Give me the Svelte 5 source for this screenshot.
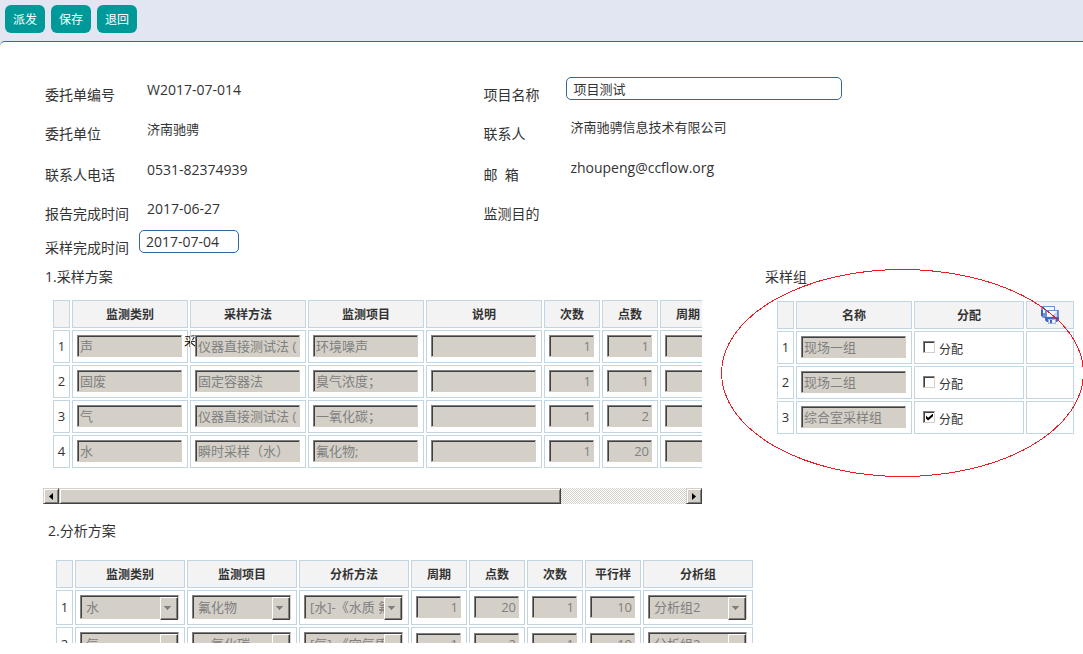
<script lang="ts">
	type Field = { id: string; label: string; value: string; kind: 'text' | 'short' | 'long' | 'empty' };

	const actions = ['派发', '保存', '退回'];

	const fields: Field[] = [
		{ id: 'orderNo', label: '委托单编号', value: 'W2017-07-014', kind: 'text' },
		{ id: 'project', label: '项目名称', value: '项目测试', kind: 'long' },
		{ id: 'client', label: '委托单位', value: '济南驰骋', kind: 'text' },
		{ id: 'contact', label: '联系人', value: '济南驰骋信息技术有限公司', kind: 'text' },
		{ id: 'phone', label: '联系人电话', value: '0531-82374939', kind: 'text' },
		{ id: 'email', label: '邮\u00a0 箱', value: 'zhoupeng@ccflow.org', kind: 'text' },
		{ id: 'reportDate', label: '报告完成时间', value: '2017-06-27', kind: 'text' },
		{ id: 'purpose', label: '监测目的', value: '', kind: 'empty' },
		{ id: 'sampleDate', label: '采样完成时间', value: '2017-07-04', kind: 'short' }
	];

	const planHeads = ['监测类别', '采样方法', '监测项目', '说明', '次数', '点数', '周期'];
	const plans = [
		['声', '仪器直接测试法 (', '环境噪声', '', '1', '1', ''],
		['固废', '固定容器法', '臭气浓度；', '', '1', '1', ''],
		['气', '仪器直接测试法 (', '一氧化碳；', '', '1', '2', ''],
		['水', '瞬时采样（水）', '氟化物;', '', '1', '20', '']
	];

	let groups = $state([
		{ name: '现场一组', assigned: false },
		{ name: '现场二组', assigned: false },
		{ name: '综合室采样组', assigned: true }
	]);

	const analysisHeads = ['监测类别', '监测项目', '分析方法', '周期', '点数', '次数', '平行样', '分析组'];
	const analyses = [
		['水', '氟化物', '[水]-《水质 氟化物的测定》', '1', '20', '1', '10', '分析组2'],
		['气', '一氧化碳', '[气]-《空气质量 一氧化碳》', '1', '2', '1', '10', '分析组2']
	];

	const isLatin = (s: string) => /^[\x20-\x7e]+$/.test(s);
	const isNumberCol = (i: number) => i > 2 && i < 7;
</script>

<div class="page">
	<header class="toolbar">
		{#each actions as action}
			<button type="button" class="action">{action}</button>
		{/each}
	</header>

	<main class="sheet">
		<div class="fields">
			{#each fields as f}
				{#if f.kind === 'short' || f.kind === 'long'}
					<label class="label" for={f.id}>{f.label}</label>
					<div class="entry">
						<input id={f.id} class="box {f.kind}" class:latin={isLatin(f.value)} value={f.value} />
					</div>
				{:else}
					<span class="label">{f.label}</span>
					<span class="value" class:latin={isLatin(f.value)}>{f.value}</span>
				{/if}
			{/each}
		</div>

		<div class="sections">
			<section>
				<h2>1.采样方案</h2>
				<div class="viewport">
					<table>
						<thead>
							<tr>
								<th class="idx"></th>
								{#each planHeads as head, i}
									<th class={i < 4 ? 'wide' : 'num'}>{head}</th>
								{/each}
							</tr>
						</thead>
						<tbody>
							{#each plans as row, r}
								<tr>
									<td class="idx">{r + 1}</td>
									{#each row as cell, i}
										<td>
											<input class="cell" class:number={i > 3} value={cell} aria-label={planHeads[i]} disabled />
											{#if r === 0 && i === 0}<span class="stray">采</span>{/if}
										</td>
									{/each}
								</tr>
							{/each}
						</tbody>
					</table>
				</div>
				<div class="scrollbar">
					<button type="button" class="raised arrow" aria-label="向左">
						<svg viewBox="0 0 4 7" width="4" height="7"><path d="M4 0v7L0 3.5z" /></svg>
					</button>
					<div class="track"><div class="raised thumb"></div></div>
					<button type="button" class="raised arrow" aria-label="向右">
						<svg viewBox="0 0 4 7" width="4" height="7"><path d="M0 0v7l4-3.5z" /></svg>
					</button>
				</div>
			</section>

			<section class="group">
				<h2>采样组</h2>
				<table>
					<thead>
						<tr>
							<th class="idx"></th>
							<th class="wide">名称</th>
							<th class="mid">分配</th>
							<th class="tool">
								<svg class="save-all" viewBox="0 0 18 18" width="18" height="18">
									<path d="M0 0h14v12H2l-2-2z" fill="#6f90d6" />
									<path d="M2 1h11v6H2z" fill="#f4f8ff" />
									<path d="M0 4h2v6H0z" fill="#3f63bd" />
									<path d="M4 4h14v10l-2 2H6l-2-2z" fill="#6f90d6" />
									<path d="M6 5h10v6H6z" fill="#f4f8ff" />
									<path d="M10 11l6-6v6z" fill="#c3d4f6" />
									<path d="M4 11h14v3h-1l-1 2H6l-2-2z" fill="#3f67c2" />
									<path d="M7 13h8v5H7z" fill="#9fb6e2" />
									<path d="M8 14h6v3H8z" fill="#eef3fb" />
									<path d="M9 14h2v3H9z" fill="#3f63bd" />
								</svg>
							</th>
						</tr>
					</thead>
					<tbody>
						{#each groups as g, r}
							<tr>
								<td class="idx">{r + 1}</td>
								<td><input class="cell" value={g.name} aria-label="名称" disabled /></td>
								<td>
									<label class="check"><input type="checkbox" bind:checked={g.assigned} /><span>分配</span></label>
								</td>
								<td></td>
							</tr>
						{/each}
					</tbody>
				</table>
				<svg class="mark" viewBox="0 0 363 208" shape-rendering="crispEdges">
					<ellipse cx="181.5" cy="104" rx="181" ry="103.5" />
				</svg>
			</section>
		</div>

		<section class="analysis">
			<h2>2.分析方案</h2>
			<table>
				<thead>
					<tr>
						<th class="idx"></th>
						{#each analysisHeads as head, i}
							<th class={isNumberCol(i) ? 'num' : 'mid'}>{head}</th>
						{/each}
					</tr>
				</thead>
				<tbody>
					{#each analyses as row, r}
						<tr>
							<td class="idx">{r + 1}</td>
							{#each row as cell, i}
								<td>
									{#if isNumberCol(i)}
										<input class="cell number" value={cell} aria-label={analysisHeads[i]} disabled />
									{:else}
										<span class="drop">
											<select aria-label={analysisHeads[i]} disabled>
												<option>{cell}</option>
											</select>
										</span>
									{/if}
								</td>
							{/each}
						</tr>
					{/each}
				</tbody>
			</table>
		</section>
	</main>
</div>

<style>
	:global(body) {
		margin: 0;
		background: #e2e6f2;
	}

	.page {
		display: flex;
		flex-direction: column;
		height: 100vh;
		overflow: hidden;
		color: #333;
		font-family: 'Open Sans', 'Noto Sans CJK SC', sans-serif;
		font-size: 13px;
	}

	.page * {
		box-sizing: border-box;
	}

	button,
	input,
	select {
		margin: 0;
		font-family: inherit;
	}

	.toolbar {
		display: flex;
		gap: 6px;
		padding: 5px 5px 8px;
	}

	.action {
		height: 28px;
		padding: 0 8px;
		border: 0;
		border-radius: 6px;
		background: #099;
		color: #fff;
		font-size: 12px;
	}

	.sheet {
		flex: 1;
		min-height: 0;
		display: flex;
		flex-direction: column;
		padding: 29px 0 11px 43px;
		border-top: 1px solid #3a5fcd;
		border-top-left-radius: 5px;
		background: #fff;
	}

	.fields {
		display: grid;
		grid-template-columns: 94px 2fr 83px 3fr;
		grid-template-rows: 38px 40px 41px 38px 30px;
		align-items: center;
		padding-left: 2px;
	}

	.label {
		padding-top: 10px;
		font-size: 14px;
		line-height: 20px;
	}

	.value {
		padding-left: 8px;
		line-height: 20px;
	}

	.value:nth-child(4n) {
		padding: 0 0 4px 4px;
	}

	.latin {
		font-size: 14px;
	}

	.entry {
		padding-bottom: 3px;
	}

	.box {
		display: block;
		height: 23px;
		padding: 0 6px;
		border: 1px solid #369;
		border-radius: 5px;
		background: #fff;
		color: #333;
	}

	.box:not(.latin) {
		font-size: 13px;
	}

	.short {
		width: 100px;
	}

	.long {
		width: 276px;
	}

	.sections {
		display: grid;
		grid-template-columns: minmax(0, 1fr) 318px;
		gap: 63px;
	}

	h2 {
		margin: 0 0 11px;
		padding: 9px 0 0 2px;
		font-size: 14px;
		font-weight: 400;
		line-height: 20px;
	}

	.viewport {
		overflow: hidden;
		padding: 0 0 18px 8px;
	}

	table {
		width: max-content;
		border-spacing: 2px;
	}

	th,
	td {
		position: relative;
		padding: 0 4px;
		border: 1px solid #c1d6e2;
	}

	th {
		height: 28px;
		background: #f3f3f3;
		font-size: 12px;
	}

	td {
		height: 33px;
		padding-bottom: 2px;
	}

	.idx {
		width: 17px;
		padding: 0 0 2px;
		text-align: center;
	}

	.wide {
		width: 116px;
	}

	.mid {
		width: 110px;
	}

	.num {
		width: 56px;
	}

	.tool {
		width: 48px;
	}

	.cell {
		position: relative;
		z-index: 1;
		display: block;
		width: 105px;
		height: 22px;
		padding: 0 2px;
		border: 1px solid #d4d0c8;
		border-top-color: #808080;
		border-left-color: #808080;
		background: #d4d0c8;
		box-shadow: inset 1px 1px 0 #404040;
		color: #808080;
		font-size: 13px;
	}

	.number {
		width: 45px;
		text-align: right;
	}

	.stray {
		position: absolute;
		top: 3px;
		right: -9px;
		font-size: 12px;
		line-height: 16px;
		color: #000;
	}

	.scrollbar {
		display: flex;
		height: 16px;
	}

	.raised {
		border: 1px solid;
		border-color: #d4d0c8 #404040 #404040 #d4d0c8;
		background: #d4d0c8;
		box-shadow:
			inset 1px 1px 0 #fff,
			inset -1px -1px 0 #808080;
	}

	.arrow {
		display: flex;
		align-items: center;
		justify-content: center;
		width: 16px;
		padding: 0;
	}

	.track {
		flex: 1;
		background: repeating-conic-gradient(#d4d0c8 0 25%, #fff 0 50%) 0 0 / 2px 2px;
	}

	.thumb {
		width: 80%;
		height: 16px;
	}

	.group {
		position: relative;
	}

	.group h2 {
		margin-bottom: 12px;
		padding-left: 0;
	}

	.group table {
		margin-left: 10px;
	}

	.save-all {
		display: block;
		margin: 0 auto;
	}

	.check {
		display: flex;
		align-items: center;
		gap: 4px;
		padding-left: 4px;
		font-size: 12px;
	}

	.check span {
		padding-top: 4px;
	}

	.check input {
		appearance: none;
		width: 12px;
		height: 12px;
		border: 1px solid #d4d0c8;
		border-top-color: #808080;
		border-left-color: #808080;
		background: #fff;
		box-shadow: inset 1px 1px 0 #404040;
	}

	.check input:checked::after {
		content: '';
		display: block;
		width: 7px;
		height: 7px;
		margin: 2px;
		background: #000;
		clip-path: polygon(0 30%, 30% 60%, 100% 0, 100% 40%, 30% 100%, 0 70%);
	}

	.mark {
		position: absolute;
		top: 11px;
		left: -44px;
		width: 363px;
		height: 208px;
		pointer-events: none;
	}

	.mark ellipse {
		fill: none;
		stroke: #ed1c24;
		stroke-width: 1;
	}

	.analysis {
		flex: 1;
		min-height: 0;
		overflow: hidden;
		padding: 8px 0 0 11px;
	}

	.analysis h2 {
		margin: 0 0 17px -8px;
	}

	.analysis td {
		height: 35px;
	}

	.drop {
		position: relative;
		display: block;
		width: 99px;
	}

	.drop::after {
		content: '';
		position: absolute;
		top: 2px;
		right: 1px;
		width: 16px;
		height: 21px;
		border: 1px solid;
		border-color: #fff #404040 #404040 #fff;
		background: linear-gradient(#808080, #808080) 3px 8px / 7px 1px no-repeat,
			linear-gradient(#808080, #808080) 4px 9px / 5px 1px no-repeat,
			linear-gradient(#808080, #808080) 5px 10px / 3px 1px no-repeat,
			linear-gradient(#808080, #808080) 6px 11px / 1px 1px no-repeat,
			#d4d0c8;
		box-shadow: inset -1px -1px 0 #808080;
	}

	select {
		appearance: none;
		display: block;
		width: 100%;
		height: 24px;
		padding: 0 16px 0 5px;
		border: 1px solid #d4d0c8;
		border-top-color: #808080;
		border-left-color: #808080;
		border-radius: 0;
		background: #d4d0c8;
		box-shadow: inset 1px 1px 0 #404040;
		color: #808080;
		font-size: 13px;
		opacity: 1;
	}
</style>
